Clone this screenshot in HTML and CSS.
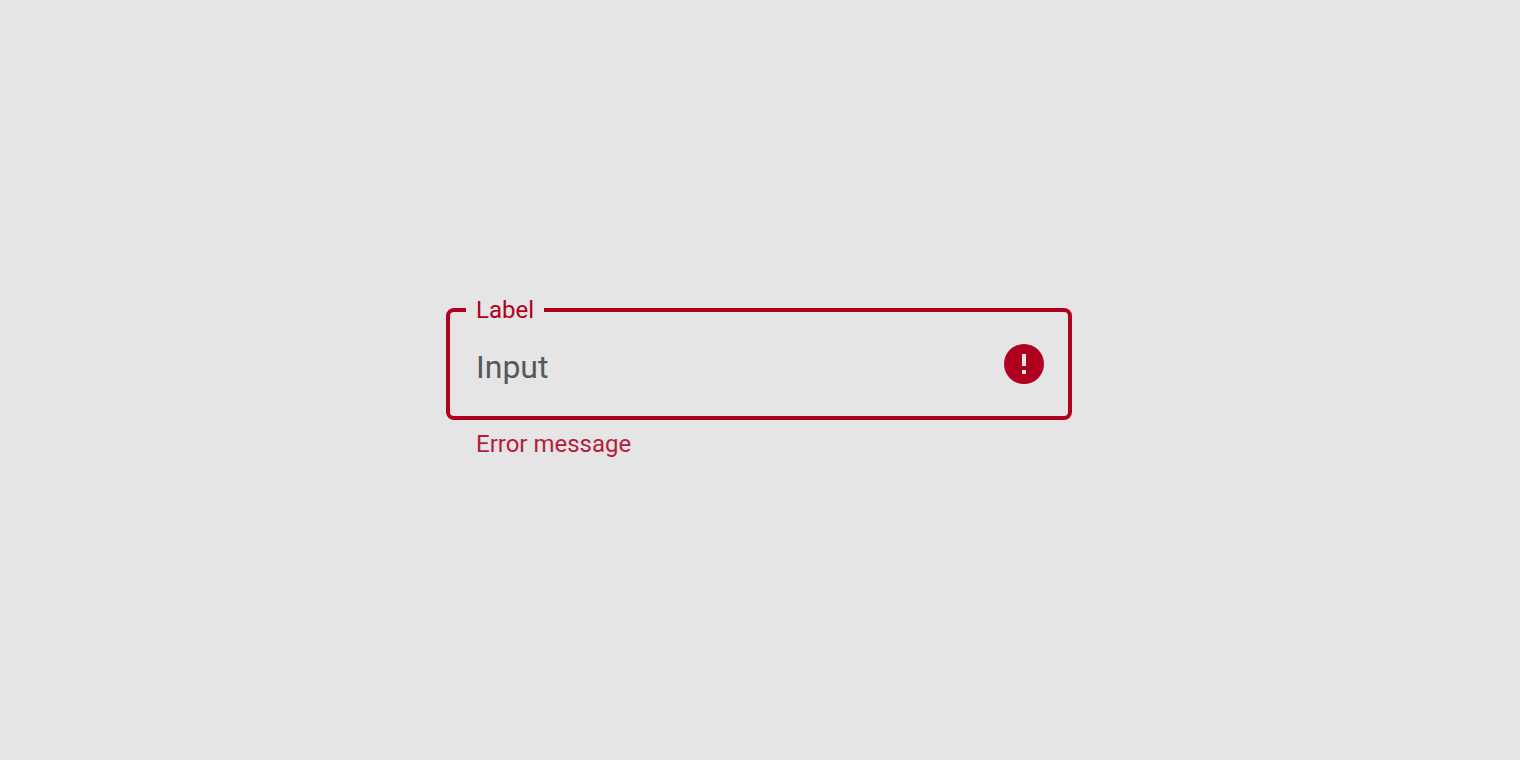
FILE: index.html
```html
<!DOCTYPE html>
<html lang="en">
<head>
  <meta charset="utf-8">
  <title>Text field</title>
  <meta name="viewport" content="width=device-width, initial-scale=1.0">
  <link rel="stylesheet" href="styles.css">
</head>
<body>
  <form class="text-field">
    <div class="outline">
      <label for="field">Label</label>
      <input id="field" type="text" value="Input" aria-invalid="true" aria-describedby="field-error">
      <svg class="error-icon" viewBox="0 0 40 40" aria-hidden="true">
        <path fill-rule="evenodd" d="M20 0a20 20 0 1 0 0 40a20 20 0 0 0 0-40zM18 10h4v12h-4zM18 26h4v4h-4z"/>
      </svg>
    </div>
    <p class="error-message" id="field-error">Error message</p>
  </form>
</body>
</html>
```
FILE: styles.css
```css
body {
  display: flex;
  justify-content: center;
  align-items: center;
  box-sizing: border-box;
  min-height: 100vh;
  margin: 0;
  padding: 6px 2px 0 0;
  background-color: #e5e5e5;
  font-family: Roboto, sans-serif;
}
.text-field {
  width: 626px;
  max-width: 100%;
}
.outline {
  position: relative;
  display: flex;
  align-items: center;
  padding: 32px 24px 32px 26px;
  border: 4px solid #b00020;
  border-radius: 8px;
}
/* sits on the border and cuts a gap in it */
.outline label {
  position: absolute;
  top: -16px;
  left: 16px;
  padding: 0 10px;
  background-color: #e5e5e5;
  color: #b00020;
  font-size: 24px;
  line-height: 28px;
}
.outline input {
  flex: 1;
  min-width: 0;
  height: 40px;
  padding: 6px 0 0;
  box-sizing: border-box;
  border: 0;
  outline: 0;
  background: none;
  color: #55595a;
  font: 32px Roboto, sans-serif;
}
.error-icon {
  width: 40px;
  height: 40px;
  fill: #b00020;
}
.error-message {
  margin: 10px 0 0;
  padding-left: 30px;
  color: #b71c3c;
  font-size: 24px;
  line-height: 28px;
}
```
